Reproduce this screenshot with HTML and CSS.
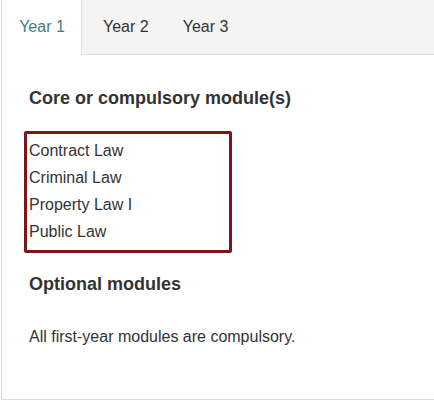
FILE: index.html
```html
<!DOCTYPE html>
<html lang="en">
<head>
  <meta charset="UTF-8" />
  <title>Modules</title>
  <link rel="stylesheet" href="styles.css">
</head>
<body>

  <div class="panel">
    <!-- Year tabs -->
    <div class="tabs">
      <div class="tab tab-active">Year 1</div>
      <div class="tab-rest">
        <div class="tab">Year 2</div>
        <div class="tab">Year 3</div>
      </div>
    </div>

    <section class="tab-content">
      <h2>Core or compulsory module(s)</h2>

      <ul class="module-box">
        <li>Contract Law</li>
        <li>Criminal Law</li>
        <li>Property Law I</li>
        <li>Public Law</li>
      </ul>

      <h2>Optional modules</h2>

      <p>All first-year modules are compulsory.</p>
    </section>
  </div>

</body>
</html>
```

FILE: styles.css
```css
body {
  margin: 0;
  padding: 0;
  font-family: 'Liberation Sans', Arial, sans-serif;
  color: #333;
  background: #fff;
}

.panel {
  margin-left: 1px;
  height: 400px;
  border-left: 1px solid #dcdcdc;
  border-bottom: 1px solid #dcdcdc;
  box-sizing: border-box;
}

.tabs {
  display: flex;
  height: 55px;
}

.tab {
  font-size: 16px;
  line-height: 54px;
  padding: 0 17px;
}

.tab-active {
  width: 79px;
  box-sizing: border-box;
  padding: 0 0 0 1px;
  text-align: center;
  color: #3f7d80;
  background: #fff;
}

.tab-rest {
  flex: 1;
  display: flex;
  padding-left: 4px;
  background: #f4f4f4;
  border-left: 1px solid #dcdcdc;
  border-bottom: 1px solid #dcdcdc;
}

.tab-content {
  padding: 33px 27px 0;
}

.tab-content h2 {
  margin: 0;
  font-size: 18px;
  font-weight: bold;
  line-height: 21px;
}

.module-box {
  list-style: none;
  width: 208px;
  box-sizing: border-box;
  margin: 22px 0 21px -5px;
  padding: 3px 2px 5px;
  border: 3px solid #7d1518;
  border-radius: 2px;
}

.module-box li {
  font-size: 16px;
  line-height: 27px;
}

.tab-content p {
  margin: 33px 0 0;
  font-size: 16px;
  line-height: 18.4px;
}
```
